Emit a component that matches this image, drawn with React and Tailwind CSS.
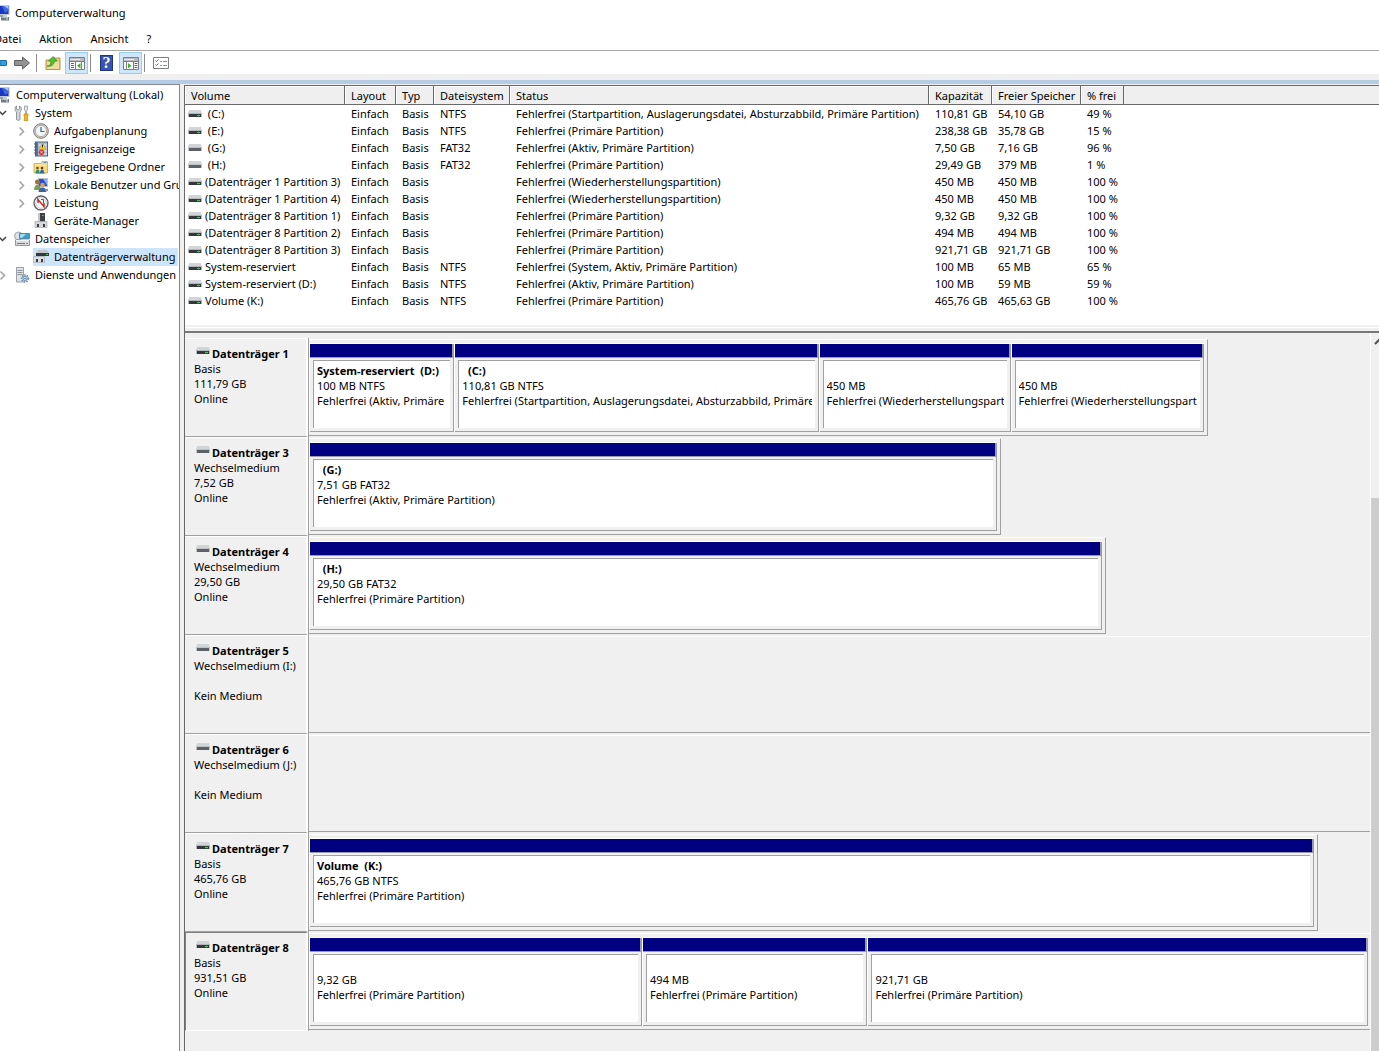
import clsx from 'clsx';

const volumes = [
  { name: ' (C:)', fs: 'NTFS', status: 'Fehlerfrei (Startpartition, Auslagerungsdatei, Absturzabbild, Primäre Partition)', size: '110,81 GB', free: '54,10 GB', pct: '49 %' },
  { name: ' (E:)', fs: 'NTFS', status: 'Fehlerfrei (Primäre Partition)', size: '238,38 GB', free: '35,78 GB', pct: '15 %' },
  { name: ' (G:)', fs: 'FAT32', status: 'Fehlerfrei (Aktiv, Primäre Partition)', size: '7,50 GB', free: '7,16 GB', pct: '96 %', removable: true },
  { name: ' (H:)', fs: 'FAT32', status: 'Fehlerfrei (Primäre Partition)', size: '29,49 GB', free: '379 MB', pct: '1 %', removable: true },
  { name: '(Datenträger 1 Partition 3)', fs: '', status: 'Fehlerfrei (Wiederherstellungspartition)', size: '450 MB', free: '450 MB', pct: '100 %' },
  { name: '(Datenträger 1 Partition 4)', fs: '', status: 'Fehlerfrei (Wiederherstellungspartition)', size: '450 MB', free: '450 MB', pct: '100 %' },
  { name: '(Datenträger 8 Partition 1)', fs: '', status: 'Fehlerfrei (Primäre Partition)', size: '9,32 GB', free: '9,32 GB', pct: '100 %' },
  { name: '(Datenträger 8 Partition 2)', fs: '', status: 'Fehlerfrei (Primäre Partition)', size: '494 MB', free: '494 MB', pct: '100 %' },
  { name: '(Datenträger 8 Partition 3)', fs: '', status: 'Fehlerfrei (Primäre Partition)', size: '921,71 GB', free: '921,71 GB', pct: '100 %' },
  { name: 'System-reserviert', fs: 'NTFS', status: 'Fehlerfrei (System, Aktiv, Primäre Partition)', size: '100 MB', free: '65 MB', pct: '65 %' },
  { name: 'System-reserviert (D:)', fs: 'NTFS', status: 'Fehlerfrei (Aktiv, Primäre Partition)', size: '100 MB', free: '59 MB', pct: '59 %' },
  { name: 'Volume (K:)', fs: 'NTFS', status: 'Fehlerfrei (Primäre Partition)', size: '465,76 GB', free: '465,63 GB', pct: '100 %' },
];

const columns = [
  { label: 'Volume', width: 'w-[160px]' },
  { label: 'Layout', width: 'w-[51px]' },
  { label: 'Typ', width: 'w-[38px]' },
  { label: 'Dateisystem', width: 'w-[76px]' },
  { label: 'Status', width: 'w-[419px]' },
  { label: 'Kapazität', width: 'w-[63px]' },
  { label: 'Freier Speicher', width: 'w-[89px]' },
  { label: '% frei', width: 'w-[43px]' },
];

// width is the share of the graph area, weight the share inside the disk
const disks = [
  {
    name: 'Datenträger 1', lines: ['Basis', '111,79 GB', 'Online'], width: 84.7,
    partitions: [
      { name: 'System-reserviert  (D:)', size: '100 MB NTFS', status: 'Fehlerfrei (Aktiv, Primäre Partition)', weight: 145 },
      { name: '  (C:)', size: '110,81 GB NTFS', status: 'Fehlerfrei (Startpartition, Auslagerungsdatei, Absturzabbild, Primäre Partition)', weight: 365 },
      { name: '', size: '450 MB', status: 'Fehlerfrei (Wiederherstellungspartition)', weight: 192 },
      { name: '', size: '450 MB', status: 'Fehlerfrei (Wiederherstellungspartition)', weight: 193 },
    ],
  },
  {
    name: 'Datenträger 3', lines: ['Wechselmedium', '7,52 GB', 'Online'], width: 65.2, removable: true,
    partitions: [{ name: '  (G:)', size: '7,51 GB FAT32', status: 'Fehlerfrei (Aktiv, Primäre Partition)', weight: 1 }],
  },
  {
    name: 'Datenträger 4', lines: ['Wechselmedium', '29,50 GB', 'Online'], width: 75.1, removable: true,
    partitions: [{ name: '  (H:)', size: '29,50 GB FAT32', status: 'Fehlerfrei (Primäre Partition)', weight: 1 }],
  },
  { name: 'Datenträger 5', lines: ['Wechselmedium (I:)', '', 'Kein Medium'], width: 100, removable: true, partitions: [] },
  { name: 'Datenträger 6', lines: ['Wechselmedium (J:)', '', 'Kein Medium'], width: 100, removable: true, partitions: [] },
  {
    name: 'Datenträger 7', lines: ['Basis', '465,76 GB', 'Online'], width: 95.1,
    partitions: [{ name: 'Volume  (K:)', size: '465,76 GB NTFS', status: 'Fehlerfrei (Primäre Partition)', weight: 1 }],
  },
  {
    name: 'Datenträger 8', lines: ['Basis', '931,51 GB', 'Online'], width: 100, selected: true,
    partitions: [
      { name: '', size: '9,32 GB', status: 'Fehlerfrei (Primäre Partition)', weight: 333 },
      { name: '', size: '494 MB', status: 'Fehlerfrei (Primäre Partition)', weight: 225 },
      { name: '', size: '921,71 GB', status: 'Fehlerfrei (Primäre Partition)', weight: 501 },
    ],
  },
];

const ComputerIcon = () => (
  <svg className="h-4 w-[10px] shrink-0" viewBox="0 0 10 16">
    <path d="M0 0h9.500v10H0z" fill="#c3c9d2" />
    <path d="M0 1h8.500v8H0z" fill="#1a37bd" />
    <path d="M2 1h6.500v5L5 8z" fill="#3f68dc" />
    <path d="M4 1h4.500v3z" fill="#a9c3f7" />
    <path d="M0 10h4v2H0z" fill="#9aa1aa" />
    <path d="M3 10h4v2H3z" fill="#c5ccd3" />
    <path d="M1 12h8v3.500H1z" fill="#6d7984" />
    <path d="M2 12.500h6" stroke="#b6c0ca" />
    <path d="M6 14h2" stroke="#dfe5ea" />
  </svg>
);

const ToolsIcon = () => (
  <svg className="size-4 shrink-0" viewBox="0 0 16 16">
    <path d="M2.500 1v3l1.500 1 1.500-1V1c2.500 1 2.500 4.500 .5 6v7.500c0 1-3.500 1-3.500 0V7C.5 5.500 .5 2 2.500 1z" fill="#d3d6da" stroke="#7c8289" strokeWidth=".8" />
    <path d="M10.500 1h3v4l-1 1v3h-1V6l-1-1z" fill="#e4e6e8" stroke="#878d94" strokeWidth=".7" />
    <path d="M10 9h4v2l-.7 1 .7 3.500h-4l.7-3.500-.7-1z" fill="#f2b91b" stroke="#bd880b" strokeWidth=".7" />
  </svg>
);

const ClockIcon = () => (
  <svg className="size-4 shrink-0" viewBox="0 0 16 16">
    <circle cx="8" cy="8" r="7.300" fill="#d0d0d0" stroke="#77797d" />
    <circle cx="8" cy="8" r="5.600" fill="#f1f5fa" stroke="#b9ae90" />
    <path d="M8 4v4.500h3.500" fill="none" stroke="#35619e" strokeWidth="1.200" />
  </svg>
);

const EventIcon = () => (
  <svg className="size-4 shrink-0" viewBox="0 0 16 16">
    <rect x="2.500" y="1" width="12" height="14" fill="#a9c0e2" stroke="#47628c" />
    <path d="M3 1h2v14H3z" fill="#54749f" />
    <path d="M1 3h3M1 6h3M1 9h3M1 12h3" stroke="#555d69" />
    <path d="M6 4h8M6 7h8M6 10h8M6 13h8" stroke="#e8f0fb" />
    <path d="M9.500 1.500l3.500 6.500H6z" fill="#f8d33a" stroke="#b8931a" strokeWidth=".6" />
    <path d="M9.500 3.500v3" stroke="#222" />
    <circle cx="8.500" cy="11.300" r="2.800" fill="#d23c32" />
    <path d="M7.500 10.300l2 2m0-2l-2 2" stroke="#fff" strokeWidth=".8" />
  </svg>
);

const SharedFolderIcon = () => (
  <svg className="size-4 shrink-0" viewBox="0 0 16 16">
    <path d="M1 4.500h7l1-2h5.500V14H1z" fill="#f4d97e" stroke="#cda64a" strokeWidth=".8" />
    <path d="M10.500 3.500h3" stroke="#4a91c9" />
    <path d="M2 6h12" stroke="#fbedb4" />
    <circle cx="4.500" cy="9" r="1.300" fill="#7b4a25" />
    <circle cx="9" cy="9" r="1.300" fill="#5f3a1c" />
    <path d="M2.500 14.500c0-5 4-5 4-1l1 1z" fill="#2a9270" />
    <path d="M7 14.500c0-5 4-5 4-1l1 1z" fill="#2d67ad" />
  </svg>
);

const UsersIcon = () => (
  <svg className="size-4 shrink-0" viewBox="0 0 16 16">
    <rect x="5.500" y="1.500" width="9" height="8" fill="#2750c8" stroke="#b7c3d6" />
    <path d="M10 2h4v6z" fill="#86a9f0" />
    <circle cx="4.500" cy="5" r="2.500" fill="#a56f35" />
    <circle cx="9.500" cy="8" r="2.300" fill="#d3a260" />
    <path d="M1 13c0-7 7-7 7 0z" fill="#7d9c5c" />
    <path d="M5.500 15c0-6 8-6 8 0z" fill="#3a62a5" />
    <path d="M12 12h3v2h-3z" fill="#8a929b" />
  </svg>
);

const PerformanceIcon = () => (
  <svg className="size-4 shrink-0" viewBox="0 0 16 16">
    <circle cx="8" cy="8" r="7" fill="#fff" stroke="#5f6468" strokeWidth="1.400" />
    <circle cx="8" cy="8" r="5.300" fill="none" stroke="#c9cccf" />
    <path d="M5 8V4.500l6 7V8" fill="none" stroke="#c92a22" strokeWidth="1.500" />
    <path d="M8 4.500h2.500V8" fill="none" stroke="#c92a22" />
  </svg>
);

const DeviceIcon = () => (
  <svg className="size-4 shrink-0" viewBox="0 0 16 16">
    <path d="M5 0h2v9H5z" fill="#c4c7ca" />
    <path d="M7 0h5v9H7z" fill="#3e4247" />
    <path d="M9 2h2v1H9z" fill="#37c94b" />
    <path d="M2 8.500h12v6H2z" fill="#d6d8da" stroke="#a5a9ad" strokeWidth=".7" />
    <path d="M4 11h2v3H4zM10 11h2v3h-2z" fill="#3a3e42" />
  </svg>
);

const StorageIcon = () => (
  <svg className="size-4 shrink-0" viewBox="0 0 16 16">
    <circle cx="4.500" cy="5" r="4" fill="#dfe3e6" stroke="#8d9499" strokeWidth=".8" />
    <path d="M5.500 2.500h10v5h-10z" fill="#3d9fc6" stroke="#2f6d8b" strokeWidth=".7" />
    <path d="M6 3h6L8 7H6z" fill="#9bdaf0" />
    <path d="M1.500 9h14v5.500h-14z" fill="#d9dbdd" stroke="#7c8185" strokeWidth=".8" />
    <path d="M2 9.500h13" stroke="#f2f3f4" />
    <path d="M3 12.500h8" stroke="#74797e" />
    <path d="M12 12.500h2" stroke="#2fc44a" />
  </svg>
);

const DiskManagementIcon = () => (
  <svg className="size-4 shrink-0" viewBox="0 0 16 16">
    <path d="M5 1h9l2 3H3z" fill="#c3c6c9" />
    <path d="M3 4h13v3H3z" fill="#34383c" />
    <path d="M13 5h2v1h-2z" fill="#3fd656" />
    <path d="M.5 7.500h11v6H.5z" fill="#dcdee0" stroke="#a9adb1" strokeWidth=".7" />
    <path d="M3 10h2v3H3zM8 10h2v3H8z" fill="#3a3e42" />
  </svg>
);

const ServicesIcon = () => (
  <svg className="size-4 shrink-0" viewBox="0 0 16 16">
    <path d="M2.500 .5h7v14.500h-7z" fill="#dfe2e5" stroke="#868c92" strokeWidth=".8" />
    <path d="M3.500 3.500h5M3.500 5.500h5M3.500 7.500h5" stroke="#8c9399" />
    <circle cx="11" cy="11.500" r="3.300" fill="#d9e8f5" stroke="#6d93b4" strokeWidth="1.800" strokeDasharray="1.500 .9" />
    <circle cx="11" cy="11.500" r="2" fill="#d9e8f5" stroke="#6d93b4" />
    <circle cx="11" cy="11.500" r=".8" fill="#4f7ca3" />
  </svg>
);

const DriveIcon = ({ removable }) => (
  <svg className="h-[9px] w-[14px] shrink-0" viewBox="0 0 14 9">
    <path d="M1 1h12l1 4H0z" fill="#d2d5d7" />
    {removable ? (
      <>
        <path d="M0 4h14v4H0z" fill="#c0c3c6" />
        <path d="M1 5h12v3H1z" fill="#5d6065" />
      </>
    ) : (
      <>
        <path d="M0 4h14v4H0z" fill="#b4b7ba" />
        <path d="M1 5h12v3H1z" fill="#34373b" />
        <path d="M9 6h3v1H9z" fill="#3fdc58" />
        <path d="M10 5h1v3h-1z" fill="#2c8f3e" fillOpacity=".6" />
      </>
    )}
  </svg>
);

const tree = [
  { label: 'System', icon: ToolsIcon, state: 'open' },
  { label: 'Aufgabenplanung', icon: ClockIcon, state: 'closed', child: true },
  { label: 'Ereignisanzeige', icon: EventIcon, state: 'closed', child: true },
  { label: 'Freigegebene Ordner', icon: SharedFolderIcon, state: 'closed', child: true },
  { label: 'Lokale Benutzer und Gruppen', icon: UsersIcon, state: 'closed', child: true },
  { label: 'Leistung', icon: PerformanceIcon, state: 'closed', child: true },
  { label: 'Geräte-Manager', icon: DeviceIcon, child: true },
  { label: 'Datenspeicher', icon: StorageIcon, state: 'open' },
  { label: 'Datenträgerverwaltung', icon: DiskManagementIcon, child: true, selected: true },
  { label: 'Dienste und Anwendungen', icon: ServicesIcon, state: 'closed' },
];

function TreeItem({ item }) {
  const Icon = item.icon;
  return (
    <li className={clsx('flex h-[18px] items-center', item.child && 'pl-[19px]')}>
      <svg className="h-3 w-[14px] shrink-0" viewBox="0 0 14 12">
        {item.state === 'open' && <path d="M-1 4l3.500 3.500L6 4" fill="none" stroke="#404040" strokeWidth="1.500" />}
        {item.state === 'closed' && <path d="M0.500 2.500l4 4-4 4" fill="none" stroke="#a0a0a0" strokeWidth="1.500" />}
      </svg>
      <button className={clsx('flex h-full items-center gap-[5px] whitespace-nowrap', item.selected && 'grow bg-[#cce5fb]')}>
        <Icon />
        {item.label}
      </button>
    </li>
  );
}

function Toolbar() {
  return (
    <div className="flex h-[24px] items-center border-t border-[#a8a8a8] pt-px">
      <button aria-label="Zurück" className="w-2">
        <svg className="h-4 w-2" viewBox="0 0 8 16">
          <path d="M0 5.500h6q.5 0 .5 .5v4q0 .5-.5 .5H0z" fill="#31a0dc" stroke="#1b6ba6" />
        </svg>
      </button>
      <button aria-label="Vorwärts" className="ml-[6px]">
        <svg className="size-4" viewBox="0 0 16 16">
          <path d="M.5 5.500h8V2l7 6-7 6v-3.500h-8z" fill="#929292" stroke="#5f5f5f" />
        </svg>
      </button>
      <span className="ml-[6px] h-[18px] w-px bg-[#8c8c8c]" />
      <button aria-label="Eine Ebene nach oben" className="ml-2">
        <svg className="size-4" viewBox="0 0 16 16">
          <path d="M1 5h6l1-2h7v11.500H1z" fill="#e5c778" stroke="#b8974a" />
          <path d="M2 7h12v7H2z" fill="#f1dc9c" />
          <path d="M2 11c3 0 4-2 4-5H3.500L8 1.500 12 6H9.500C9 10 6 12 2 11z" fill="#4fc52c" stroke="#2f8b1a" strokeWidth=".7" />
        </svg>
      </button>
      <button aria-label="Konsolenstruktur" className="ml-1 flex h-[22px] w-[23px] items-center justify-center border border-[#99cdf5] bg-[#cfe7fa]">
        <svg className="size-4" viewBox="0 0 16 16">
          <path d="M.5 2.500h15v12H.5z" fill="#fff" stroke="#7b7f84" />
          <path d="M1 3h14v3H1z" fill="#b9bdc2" />
          <path d="M1 4.500h10" stroke="#e9ebed" />
          <path d="M1 6.500h14M6.500 7v7M12.500 7v7" stroke="#7b7f84" fill="none" />
          <path d="M2 8.500h3M2 10.500h3M2 12.500h3" stroke="#62676d" />
          <path d="M11.500 8v5.500L8 10.700z" fill="#3cb52b" />
        </svg>
      </button>
      <span className="ml-[2px] h-[18px] w-px bg-[#8c8c8c]" />
      <button aria-label="Hilfe" className="ml-[9px] flex h-4 w-[13px] items-center justify-center border border-[#20357c] bg-[#3554b4] font-['Liberation_Serif',serif] text-base/4 font-bold text-white">
        ?
      </button>
      <button aria-label="Aktionsbereich" className="ml-[6px] flex h-[22px] w-[23px] items-center justify-center border border-[#99cdf5] bg-[#cfe7fa]">
        <svg className="size-4" viewBox="0 0 16 16">
          <path d="M.5 2.500h15v12H.5z" fill="#fff" stroke="#7b7f84" />
          <path d="M1 3h14v3H1z" fill="#b9bdc2" />
          <path d="M1 4.500h10" stroke="#e9ebed" />
          <path d="M1 6.500h14M3.500 7v7M10.500 7v7" stroke="#7b7f84" />
          <path d="M11.500 8.500h3M11.500 10.500h3M11.500 12.500h3" stroke="#62676d" />
          <path d="M5 8v5.500l3.500-2.800z" fill="#3cb52b" />
        </svg>
      </button>
      <span className="ml-[2px] h-[18px] w-px bg-[#8c8c8c]" />
      <button aria-label="Eigenschaften" className="ml-2">
        <svg className="size-4" viewBox="0 0 16 16">
          <path d="M.5 2.500h15v11H.5z" fill="#fff" stroke="#7d8186" />
          <path d="M2.500 5.500l1 1 2-2M2.500 9.500l1 1 2-2" fill="none" stroke="#2f6fc0" />
          <path d="M7 6.500h2M10 6.500h4M7 10.500h2M10 10.500h4" stroke="#8d9196" />
        </svg>
      </button>
    </div>
  );
}

function VolumeTable() {
  return (
    <table className="w-full table-fixed border-separate border-spacing-0 text-left whitespace-nowrap">
      <thead>
        <tr className="h-[19px] bg-[#efefef]">
          {columns.map((col) => (
            <th key={col.label} className={clsx('border-r border-b border-[#696969] p-0 font-normal', col.width)}>
              <div className="h-[18px] border-t border-l border-white pl-[5px] leading-[18px]">{col.label}</div>
            </th>
          ))}
          <th className="border-b border-[#696969] p-0" />
        </tr>
      </thead>
      <tbody>
        {volumes.map((vol) => (
          <tr key={vol.name} className="h-[17px] leading-[17px]">
            <td className="p-0">
              <div className="flex items-center gap-[3px] pl-[3px] whitespace-pre">
                <DriveIcon removable={vol.removable} />
                {vol.name}
              </div>
            </td>
            <td className="p-0 pl-[6px]">Einfach</td>
            <td className="p-0 pl-[6px]">Basis</td>
            <td className="p-0 pl-[6px]">{vol.fs}</td>
            <td className="p-0 pl-[6px]">{vol.status}</td>
            <td className="p-0 pl-[6px]">{vol.size}</td>
            <td className="p-0 pl-[6px]">{vol.free}</td>
            <td className="p-0 pl-[6px]">{vol.pct}</td>
            <td className="p-0" />
          </tr>
        ))}
      </tbody>
    </table>
  );
}

function Partition({ part }) {
  return (
    <div
      className="flex min-w-0 basis-0 flex-col border-t border-l border-white"
      style={{ flexGrow: part.weight }}
    >
      <div className="h-[14px] border-r-2 border-b border-[#9a9aa6] bg-[#000080]" />
      <div className="flex grow border-r border-b border-[#a0a0a0] p-[3px] pt-[2px]">
        <div className="min-w-0 grow border-t border-l border-[#a0a0a0] bg-white px-[3px] pt-[2px] leading-[15px]">
          <div className="overflow-hidden whitespace-pre">
            <div className="h-[15px] font-bold">{part.name}</div>
            <div>{part.size}</div>
            <div>{part.status}</div>
          </div>
        </div>
      </div>
    </div>
  );
}

function DiskRow({ disk }) {
  const full = disk.width === 100;
  return (
    <section className="flex h-[99px]">
      <div
        className={clsx(
          'flex w-[123px] shrink-0 flex-col border-t border-r-2 border-b pt-[7px] leading-[15px] whitespace-nowrap',
          disk.selected
            ? 'border-l border-t-[#808080] border-r-white border-b-white border-l-[#808080] pl-2'
            : 'border-t-white border-r-white border-b-[#a0a0a0] pl-[9px]'
        )}
      >
        <div className="flex gap-[2px] pl-[2px] font-bold">
          <DriveIcon removable={disk.removable} />
          {disk.name}
        </div>
        {disk.lines.map((line, i) => (
          <div key={i} className="h-[15px]">{line}</div>
        ))}
      </div>
      <div className="min-w-0 grow border-l border-[#a0a0a0] py-px">
        <div
          className={clsx(
            'flex h-full border-t border-b border-t-white border-b-[#a0a0a0] py-[3px]',
            full ? 'pr-[2px]' : 'border-r border-r-[#a0a0a0] pr-[3px]'
          )}
          style={{ width: `${disk.width}%` }}
        >
          {disk.partitions.map((part, i) => (
            <Partition key={i} part={part} />
          ))}
        </div>
      </div>
    </section>
  );
}

export default function App() {
  return (
    <div className="flex h-screen flex-col overflow-hidden bg-white font-['Noto_Sans',sans-serif] text-[11px] text-black">
      <header className="flex h-[26px] items-center gap-[5px]">
        <ComputerIcon />
        <h1>Computerverwaltung</h1>
      </header>
      <nav className="flex h-6 items-center gap-[18px] pt-[2px]">
        <button className="-ml-1.5">Datei</button>
        <button>Aktion</button>
        <button>Ansicht</button>
        <button>?</button>
      </nav>
      <Toolbar />
      <div className="h-[10px] shrink-0 border-b-4 border-[#b5cce5] bg-[#f0f0f0]" />

      <div className="flex min-h-0 grow bg-[#f0f0f0]">
        <aside className="w-[180px] shrink-0 overflow-hidden border-t border-r border-[#828790] bg-white pt-px pr-px">
          <div className="flex h-[18px] items-center gap-[6px] whitespace-nowrap">
            <ComputerIcon />
            Computerverwaltung (Lokal)
          </div>
          <ul>
            {tree.map((item) => (
              <TreeItem key={item.label} item={item} />
            ))}
          </ul>
        </aside>

        <main className="mt-px ml-1 flex min-w-0 grow flex-col border-t border-l border-[#696969]">
          <div className="bg-white pb-4">
            <VolumeTable />
          </div>
          <div className="h-2 shrink-0 border-b-2 border-[#787878] bg-[#f0f0f0] pt-[2px]">
            <div className="h-px bg-white" />
          </div>
          <div className="flex min-h-0 grow overflow-hidden">
            <div className="min-w-0 grow pt-[5px]">
              {disks.map((disk) => (
                <DiskRow key={disk.name} disk={disk} />
              ))}
            </div>
            <div className="flex w-[9px] shrink-0 flex-col border-l border-white">
              <svg className="mt-[5px] h-[7px] w-2" viewBox="0 0 8 7">
                <path d="M4 6l5-5" stroke="#505050" strokeWidth="2" />
              </svg>
              <div className="mt-[153px] grow bg-[#cdcdcd]" />
            </div>
          </div>
        </main>
      </div>
    </div>
  );
}
